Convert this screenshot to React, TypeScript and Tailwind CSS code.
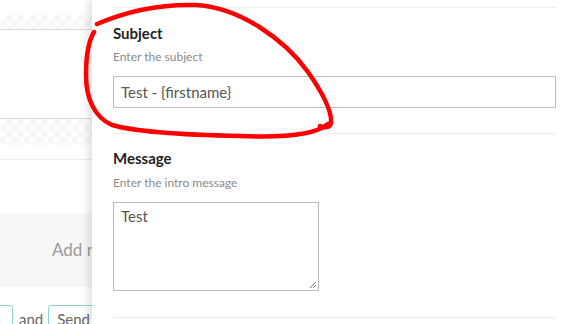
import React from "react";

const checker =
  "bg-[repeating-conic-gradient(#f7f7f7_0_25%,#fdfdfd_0_50%)] bg-[length:12px_12px]";

export default function App() {
  return (
    <div className="relative w-[573px] h-[324px] overflow-hidden bg-white font-['Lato','Noto_Sans',sans-serif]">
      {/* background page */}
      <div className="flex flex-col w-[573px]">
        <div className="h-[15px] bg-white" />
        <div className={`h-[15px] border-b border-[#dcdcdc] ${checker}`} />
        <div className="h-[89px] bg-white border-b border-[#dcdcdc]" />
        <div className={`h-[26px] ${checker}`} />
        <div className="h-[15px] bg-white border-b border-[#ececec]" />
        <div className="h-[53px] bg-white" />
        <div className="h-[74px] bg-[#f7f7f7] flex items-center pl-[52px] text-[17px] text-[#9a9a9a]">
          Add new section
        </div>
        <div className="h-[18px] bg-white" />
        <div className="flex items-start text-[15px] text-[#666]">
          <div className="h-[28px] w-[52px] -ml-[39px] border border-[#8ad6d3] rounded-[3px] pl-[8px] pt-[3px] leading-[20px]">
            Save
          </div>
          <span className="ml-[6px] pt-[4px] leading-[20px]">and</span>
          <div className="ml-[5px] h-[28px] border border-[#8ad6d3] rounded-[3px] px-[8px] pt-[3px] leading-[20px] whitespace-nowrap">
            Send now
          </div>
        </div>
      </div>

      {/* slide-over panel */}
      <div className="absolute top-0 right-0 h-full w-[481px] bg-white shadow-[-4px_0_8px_rgba(0,0,0,0.12)] pl-[21px] pr-[17px]">
        <div className="mt-[7px] border-t border-[#eeeeee]" />
        <div className="pt-[15px]">
          <div className="text-[15px] font-bold text-[#222] leading-[20px]">Subject</div>
          <div className="mt-[7px] text-[12px] text-[#8a8a8a] leading-[14px]">Enter the subject</div>
          <div className="mt-[12px] h-[32px] border border-[#bdbdbd] flex items-center pl-[7px] text-[15px] text-[#555]">
            Test - {"{firstname}"}
          </div>
        </div>
        <div className="mt-[25px] border-t border-[#eeeeee]" />
        <div className="pt-[14px]">
          <div className="text-[15px] font-bold text-[#222] leading-[20px]">Message</div>
          <div className="mt-[8px] text-[12px] text-[#8a8a8a] leading-[14px]">Enter the intro message</div>
          <div className="relative mt-[12px] w-[206px] h-[89px] border border-[#bdbdbd] pl-[7px] pt-[3px] text-[15px] text-[#555] leading-[20px]">
            Test
            <svg className="absolute right-[1px] bottom-[1px]" width="9" height="9" viewBox="0 0 9 9">
              <path d="M8 2 L2 8 M8 5 L5 8" stroke="#777" strokeWidth="1" />
            </svg>
          </div>
        </div>
        <div className="mt-[26px] border-t border-[#eeeeee]" />
      </div>

      {/* red hand-drawn annotation */}
      <svg className="absolute inset-0 pointer-events-none" width="573" height="324" viewBox="0 0 573 324">
        <path
          d="M97 24 C 125 12, 160 4, 195 5 C 240 7, 285 40, 308 72 C 322 92, 332 112, 331 123 C 330 128, 324 128, 320 126"
          fill="none"
          stroke="#ff0000"
          strokeWidth="4.5"
          strokeLinecap="round"
        />
        <path
          d="M328 124 C 315 135, 285 138, 240 136 C 190 135, 140 133, 112 125 C 94 117, 86 98, 86 75 C 86 58, 88 42, 94 32"
          fill="none"
          stroke="#ff0000"
          strokeWidth="4.5"
          strokeLinecap="round"
        />
      </svg>
    </div>
  );
}
